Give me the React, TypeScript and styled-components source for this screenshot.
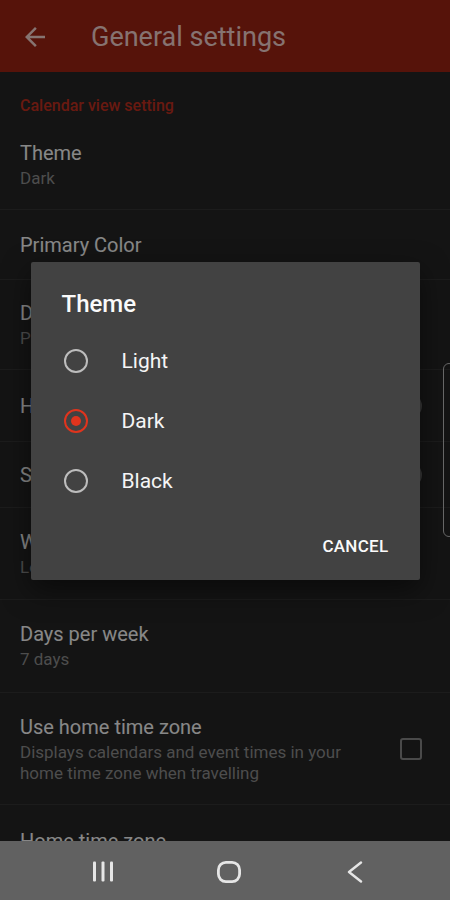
import React from 'react'
import styled, { createGlobalStyle } from 'styled-components'

const GlobalStyle = createGlobalStyle`
    html, body {
        margin:0;
        padding:0;
        background:#141414;
    }
    body {
        font-family: Roboto, "Noto Sans", "Liberation Sans", sans-serif;
    }
    * { box-sizing:border-box; }
`;

const Phone = styled.div`
    width:450px;
    height:900px;
    display:flex;
    flex-direction:column;
    overflow:hidden;
`;

const Screen = styled.div`
    position:relative;
    flex:1;
    display:flex;
    flex-direction:column;
    background:#222;
    overflow:hidden;
`;

const AppBar = styled.header`
    flex-shrink:0;
    height:72px;
    display:flex;
    align-items:center;
    gap:41px;
    padding:2px 0 0 20px;
    background:#8f2012;
    color:rgba(255,255,255,.72);
`;

const AppTitle = styled.h1`
    margin:0;
    font-size:27px;
    font-weight:400;
`;

const SectionLabel = styled.div`
    flex-shrink:0;
    height:48px;
    padding:24px 20px 0;
    font-size:16px;
    line-height:20px;
    font-weight:500;
    color:#b02b1c;
`;

const Row = styled.div<{ $h: number }>`
    flex-shrink:0;
    height:${p => p.$h}px;
    display:flex;
    align-items:center;
    gap:20px;
    padding:0 28px 0 20px;
    border-bottom:1px solid #2f2f2f;
`;

const RowText = styled.div`
    flex:1;
    min-width:0;
`;

const RowTitle = styled.div`
    font-size:20px;
    line-height:26px;
    color:#e2e2e2;
`;

const RowSub = styled.div<{ $desc?: boolean }>`
    font-size:17px;
    line-height:${p => p.$desc ? 21 : 24}px;
    margin-top:${p => p.$desc ? 2 : 0}px;
    color:#808080;
`;

const Switch = styled.span`
    width:38px;
    height:24px;
    border-radius:12px;
    background:#5c5c5c;
`;

const Checkbox = styled.span`
    width:22px;
    height:22px;
    border:2.5px solid #7c7c7c;
    border-radius:3px;
`;

const Scrim = styled.div`
    position:absolute;
    inset:0;
    display:flex;
    align-items:center;
    justify-content:center;
    background:rgba(0,0,0,.4);
`;

const Dialog = styled.div`
    width:389px;
    display:flex;
    flex-direction:column;
    padding:26px 0 16px;
    background:#424242;
    border-radius:2px;
    box-shadow:0 10px 28px rgba(0,0,0,.5);
`;

const DialogTitle = styled.h2`
    margin:0;
    padding:0 31px;
    font-size:24px;
    line-height:32px;
    font-weight:500;
    color:#fafafa;
`;

const Options = styled.div`
    margin-top:11px;
    display:flex;
    flex-direction:column;
`;

const Option = styled.label`
    height:60px;
    display:flex;
    align-items:center;
    gap:34px;
    padding-left:33px;
    font-size:21px;
    color:#f5f5f5;
`;

const Radio = styled.span<{ $checked?: boolean }>`
    width:24px;
    height:24px;
    display:flex;
    align-items:center;
    justify-content:center;
    border-radius:50%;
    border:2px solid ${p => p.$checked ? '#e0341d' : '#bdbdbd'};
    &::after {
        content:'';
        display:${p => p.$checked ? 'block' : 'none'};
        width:10px;
        height:10px;
        border-radius:50%;
        background:#e0341d;
    }
`;

const Actions = styled.div`
    margin-top:17px;
    display:flex;
    justify-content:flex-end;
    padding-right:23px;
`;

const TextButton = styled.button`
    height:36px;
    padding:0 8px;
    border:0;
    background:none;
    font-family:inherit;
    font-size:17px;
    font-weight:500;
    letter-spacing:.3px;
    color:#fafafa;
`;

const EdgeHandle = styled.div`
    position:absolute;
    top:363px;
    right:-5px;
    width:12px;
    height:174px;
    border:1.5px solid #666;
    border-radius:8px;
`;

const NavBar = styled.nav`
    flex-shrink:0;
    height:59px;
    display:flex;
    align-items:center;
    justify-content:center;
    gap:86px;
    padding:2px 0 0 7px;
    background:#616161;
    color:#e6e6e6;
`;

const NavSlot = styled.span`
    width:40px;
    display:flex;
    justify-content:center;
`;

const rows = [
    { h: 90, title: 'Theme', sub: 'Dark' },
    { h: 70, title: 'Primary Color' },
    { h: 90, title: 'Default view', sub: 'Planner' },
    { h: 72, title: 'Hide declined events', toggle: true },
    { h: 66, title: 'Show week numbers', toggle: true },
    { h: 92, title: 'Week start', sub: 'Locale default' },
    { h: 93, title: 'Days per week', sub: '7 days' },
];

const themes = ['Light', 'Dark', 'Black'];

const BackArrow = () => (
    <svg width="30" height="30" viewBox="0 0 24 24" fill="currentColor">
        <path d="M20 11H7.83l5.59-5.59L12 4l-8 8 8 8 1.41-1.41L7.83 13H20v-2z" />
    </svg>
);

const App = () => {
    return <>
        <GlobalStyle />
        <Phone>
            <Screen>
                <AppBar>
                    <BackArrow />
                    <AppTitle>General settings</AppTitle>
                </AppBar>
                <SectionLabel>Calendar view setting</SectionLabel>
                {
                    rows.map(r => <Row key={ r.title } $h={ r.h }>
                        <RowText>
                            <RowTitle>{ r.title }</RowTitle>
                            { r.sub && <RowSub>{ r.sub }</RowSub> }
                        </RowText>
                        { r.toggle && <Switch /> }
                    </Row>)
                }
                <Row $h={ 112 }>
                    <RowText>
                        <RowTitle>Use home time zone</RowTitle>
                        <RowSub $desc>Displays calendars and event times in your home time zone when travelling</RowSub>
                    </RowText>
                    <Checkbox />
                </Row>
                <Row $h={ 96 }>
                    <RowText>
                        <RowTitle>Home time zone</RowTitle>
                        <RowSub>(GMT+01:00) Central European Time</RowSub>
                    </RowText>
                </Row>
                <Scrim>
                    <Dialog>
                        <DialogTitle>Theme</DialogTitle>
                        <Options>
                            {
                                themes.map(t => <Option key={ t }>
                                    <Radio $checked={ t === 'Dark' } />
                                    { t }
                                </Option>)
                            }
                        </Options>
                        <Actions>
                            <TextButton>CANCEL</TextButton>
                        </Actions>
                    </Dialog>
                </Scrim>
                <EdgeHandle />
            </Screen>
            <NavBar>
                <NavSlot>
                    <svg width="22" height="21" viewBox="0 0 22 21" fill="currentColor">
                        <rect x="1" y="0.5" width="3" height="20" rx="1" />
                        <rect x="9.5" y="0.5" width="3" height="20" rx="1" />
                        <rect x="18" y="0.5" width="3" height="20" rx="1" />
                    </svg>
                </NavSlot>
                <NavSlot>
                    <svg width="24" height="22" viewBox="0 0 24 22" fill="none" stroke="currentColor" strokeWidth="2.8">
                        <rect x="1.4" y="1.4" width="21.2" height="19.2" rx="7.5" />
                    </svg>
                </NavSlot>
                <NavSlot>
                    <svg width="16" height="22" viewBox="0 0 16 22" fill="none" stroke="currentColor" strokeWidth="2.4" strokeLinecap="round" strokeLinejoin="round">
                        <polyline points="14,1.5 2,11 14,20.5" />
                    </svg>
                </NavSlot>
            </NavBar>
        </Phone>
    </>
}
export default App
